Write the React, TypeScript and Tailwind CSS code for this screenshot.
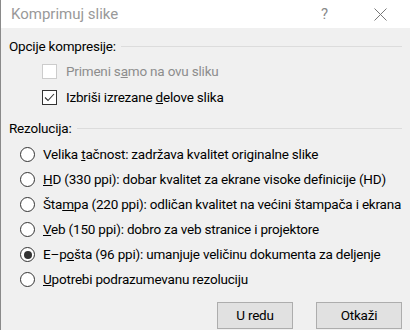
import React from "react";

const font = { fontFamily: 'Roboto, "Noto Sans", sans-serif' };

function Checkbox({ checked, disabled }: { checked?: boolean; disabled?: boolean }) {
  return (
    <span
      className={`flex h-[15px] w-[15px] shrink-0 items-center justify-center border bg-white ${
        disabled ? "border-[#cccccc]" : "border-[#333333]"
      }`}
    >
      {checked && (
        <svg width="11" height="9" viewBox="0 0 11 9" fill="none">
          <path d="M1 4.5 L4 7.5 L10 1" stroke="#333" strokeWidth="1.1" />
        </svg>
      )}
    </span>
  );
}

function Radio({ checked }: { checked?: boolean }) {
  return (
    <span className="flex h-[15px] w-[15px] shrink-0 items-center justify-center rounded-full border border-[#333333] bg-white">
      {checked && <span className="h-[8px] w-[8px] rounded-full bg-[#333333]" />}
    </span>
  );
}

function Section({ label }: { label: string }) {
  return (
    <div className="flex h-[20px] items-center pl-[8px] pr-[8px]">
      <span>{label}</span>
      <span className="ml-[5px] h-px flex-1 bg-[#dcdcdc]" />
    </div>
  );
}

function RadioRow({ checked, children }: { checked?: boolean; children: React.ReactNode }) {
  return (
    <div className="flex h-[25px] items-center gap-[8px] pl-[19px]">
      <Radio checked={checked} />
      <span className="whitespace-nowrap">{children}</span>
    </div>
  );
}

export default function App() {
  return (
    <div
      className="flex h-[330px] w-[410px] flex-col overflow-hidden border-l border-[#8a8a8a] bg-[#f0f0f0] text-[13.5px] tracking-[-0.2px] text-black"
      style={font}
    >
      <div className="flex h-[28px] items-center bg-white pl-[10px] text-[15px] tracking-normal text-[#999999]">
        <span className="flex-1">Komprimuj slike</span>
        <span className="w-[20px] text-[#8a8a8a]">?</span>
        <svg className="ml-[33px] mr-[23px]" width="13" height="13" viewBox="0 0 13 13">
          <path d="M0.5 0.5 L12.5 12.5 M12.5 0.5 L0.5 12.5" stroke="#777" strokeWidth="1" />
        </svg>
      </div>

      <div className="mt-[8px]">
        <Section label="Opcije kompresije:" />
      </div>
      <div className="mt-[2px] flex h-[26px] items-center gap-[9px] pl-[41px]">
        <Checkbox disabled />
        <span className="text-[#8d8d8d]">
          Primeni s<u>a</u>mo na ovu sliku
        </span>
      </div>
      <div className="flex h-[26px] items-center gap-[9px] pl-[41px]">
        <Checkbox checked />
        <span>
          Izbriši izrezane <u>d</u>elove slika
        </span>
      </div>

      <div className="mt-[8px]">
        <Section label="Rezolucija:" />
      </div>
      <div className="mt-[4px] flex flex-col">
        <RadioRow>
          Velika <u>t</u>ačnost: zadržava kvalitet originalne slike
        </RadioRow>
        <RadioRow>
          <u>H</u>D (330 ppi): dobar kvalitet za ekrane visoke definicije (HD)
        </RadioRow>
        <RadioRow>
          Šta<u>m</u>pa (220 ppi): odličan kvalitet na većini štampača i ekrana
        </RadioRow>
        <RadioRow>
          <u>V</u>eb (150 ppi): dobro za veb stranice i projektore
        </RadioRow>
        <RadioRow checked>
          E–p<u>o</u>šta (96 ppi): umanjuje veličinu dokumenta za deljenje
        </RadioRow>
        <RadioRow>
          <u>U</u>potrebi podrazumevanu rezoluciju
        </RadioRow>
      </div>

      <div className="mt-[10px] flex justify-end gap-[23px] pr-[8px]">
        <button className="h-[27px] w-[76px] border border-[#adadad] bg-[#e1e1e1]">U redu</button>
        <button className="h-[27px] w-[86px] border border-[#adadad] bg-[#e1e1e1]">Otkaži</button>
      </div>
    </div>
  );
}
